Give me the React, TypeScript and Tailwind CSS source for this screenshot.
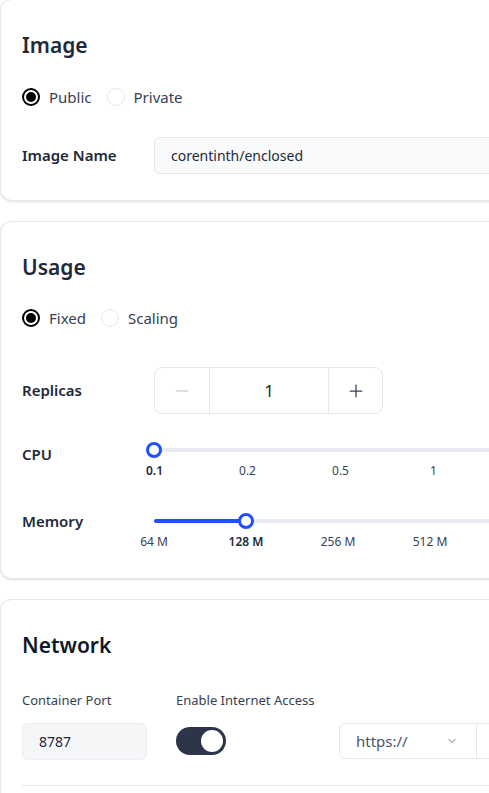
import { ChevronDown, Minus, Plus } from 'lucide-react'

const font = { fontFamily: '"Noto Sans", "Open Sans", sans-serif' }

function Radio({ label, checked }: { label: string; checked?: boolean }) {
  return (
    <label className="flex items-center gap-[9px] text-[15px] text-gray-700">
      {checked ? (
        <span className="w-[18px] h-[18px] rounded-full border-2 border-black flex items-center justify-center">
          <span className="w-[10px] h-[10px] rounded-full bg-black" />
        </span>
      ) : (
        <span className="w-[18px] h-[18px] rounded-full border border-gray-200 bg-white" />
      )}
      {label}
    </label>
  )
}

function Card({ children, className }: { children: React.ReactNode; className?: string }) {
  return (
    <div className={`w-[760px] bg-white border border-gray-200 rounded-xl shadow-sm px-[21px] ${className ?? ''}`}>
      {children}
    </div>
  )
}

function Slider({
  ticks,
  value,
  step,
}: {
  ticks: string[]
  value: number
  step: number
}) {
  const width = step * ticks.length
  return (
    <div className="flex flex-col">
      <div className="relative h-4 flex items-center" style={{ width }}>
        <div className="absolute left-0 right-0 h-1 rounded-full bg-[#e8eaf1]" />
        <div className="absolute left-0 h-1 rounded-full bg-[#1f4fff]" style={{ width: value * step }} />
        <div
          className="absolute w-4 h-4 -ml-2 rounded-full bg-white border-[3px] border-[#1f4fff]"
          style={{ left: value * step }}
        />
      </div>
      <div className="flex mt-[4px] -ml-[46px]">
        {ticks.map((t, i) => (
          <span
            key={t}
            className={`text-center text-[12px] ${i === value ? 'font-semibold text-gray-800' : 'text-gray-700'}`}
            style={{ width: step }}
          >
            {t}
          </span>
        ))}
      </div>
    </div>
  )
}

export default function App() {
  return (
    <div className="w-[489px] h-[793px] overflow-hidden bg-white" style={font}>
      <div className="flex flex-col gap-5 -mt-px">
        <Card className="pt-[31px] pb-[26px]">
          <h2 className="text-[21px] leading-[28px] font-semibold text-gray-800">Image</h2>
          <div className="flex items-center gap-[15px] mt-[27px]">
            <Radio label="Public" checked />
            <Radio label="Private" />
          </div>
          <div className="flex items-center mt-[28px]">
            <span className="w-[132px] text-[15px] font-semibold text-gray-800">Image Name</span>
            <div className="flex-1 h-[37px] flex items-center px-4 bg-[#f9fafb] border border-gray-200 rounded-md text-[14px] text-gray-800">
              corentinth/enclosed
            </div>
          </div>
        </Card>

        <Card className="pt-[31px] pb-[27px]">
          <h2 className="text-[21px] leading-[28px] font-semibold text-gray-800">Usage</h2>
          <div className="flex items-center gap-[15px] mt-[26px]">
            <Radio label="Fixed" checked />
            <Radio label="Scaling" />
          </div>
          <div className="flex items-center mt-[38px]">
            <span className="w-[132px] text-[15px] font-semibold text-gray-800">Replicas</span>
            <div className="flex h-[47px] border border-gray-200 rounded-lg">
              <div className="w-[55px] flex items-center justify-center border-r border-gray-200 text-gray-300">
                <Minus className="w-5 h-5" strokeWidth={2} />
              </div>
              <div className="w-[118px] flex items-center justify-center text-[17px] text-gray-800">1</div>
              <div className="w-[54px] flex items-center justify-center border-l border-gray-200 text-gray-700">
                <Plus className="w-5 h-5" strokeWidth={1.5} />
              </div>
            </div>
          </div>
          <div className="flex items-start mt-[28px]">
            <span className="w-[132px] text-[15px] font-semibold text-gray-800 mt-[1px]">CPU</span>
            <Slider ticks={['0.1', '0.2', '0.5', '1']} value={0} step={93} />
          </div>
          <div className="flex items-start mt-[33px]">
            <span className="w-[132px] text-[15px] font-semibold text-gray-800 mt-[-3px]">Memory</span>
            <Slider ticks={['64 M', '128 M', '256 M', '512 M']} value={1} step={92} />
          </div>
        </Card>

        <Card className="pt-[31px] pb-6">
          <h2 className="text-[21px] leading-[28px] font-semibold text-gray-900">Network</h2>
          <div className="flex mt-[31px]">
            <div className="flex flex-col w-[154px]">
              <span className="text-[13px] text-gray-700 leading-5">Container Port</span>
              <div className="mt-[13px] w-[125px] h-[37px] flex items-center px-4 bg-[#f5f6f8] border border-[#eceef1] rounded-md text-[14px] text-gray-800">
                8787
              </div>
            </div>
            <div className="flex flex-col w-[163px]">
              <span className="text-[13px] text-gray-700 leading-5">Enable Internet Access</span>
              <div className="mt-[17px] w-[50px] h-[28px] rounded-full bg-[#2d3648] flex items-center justify-end px-[3px]">
                <span className="w-[22px] h-[22px] rounded-full bg-white" />
              </div>
            </div>
            <div className="flex mt-[33px] h-[36px]">
              <div className="w-[138px] flex items-center justify-between pl-[16px] pr-[18px] border border-gray-200 rounded-l-md text-[15px] text-gray-600">
                https://
                <ChevronDown className="w-3 h-3 text-gray-500" strokeWidth={2} />
              </div>
              <div className="w-[200px] border border-l-0 border-gray-200" />
            </div>
          </div>
          <div className="mt-[25px] border-t border-gray-200" />
        </Card>
      </div>
    </div>
  )
}
